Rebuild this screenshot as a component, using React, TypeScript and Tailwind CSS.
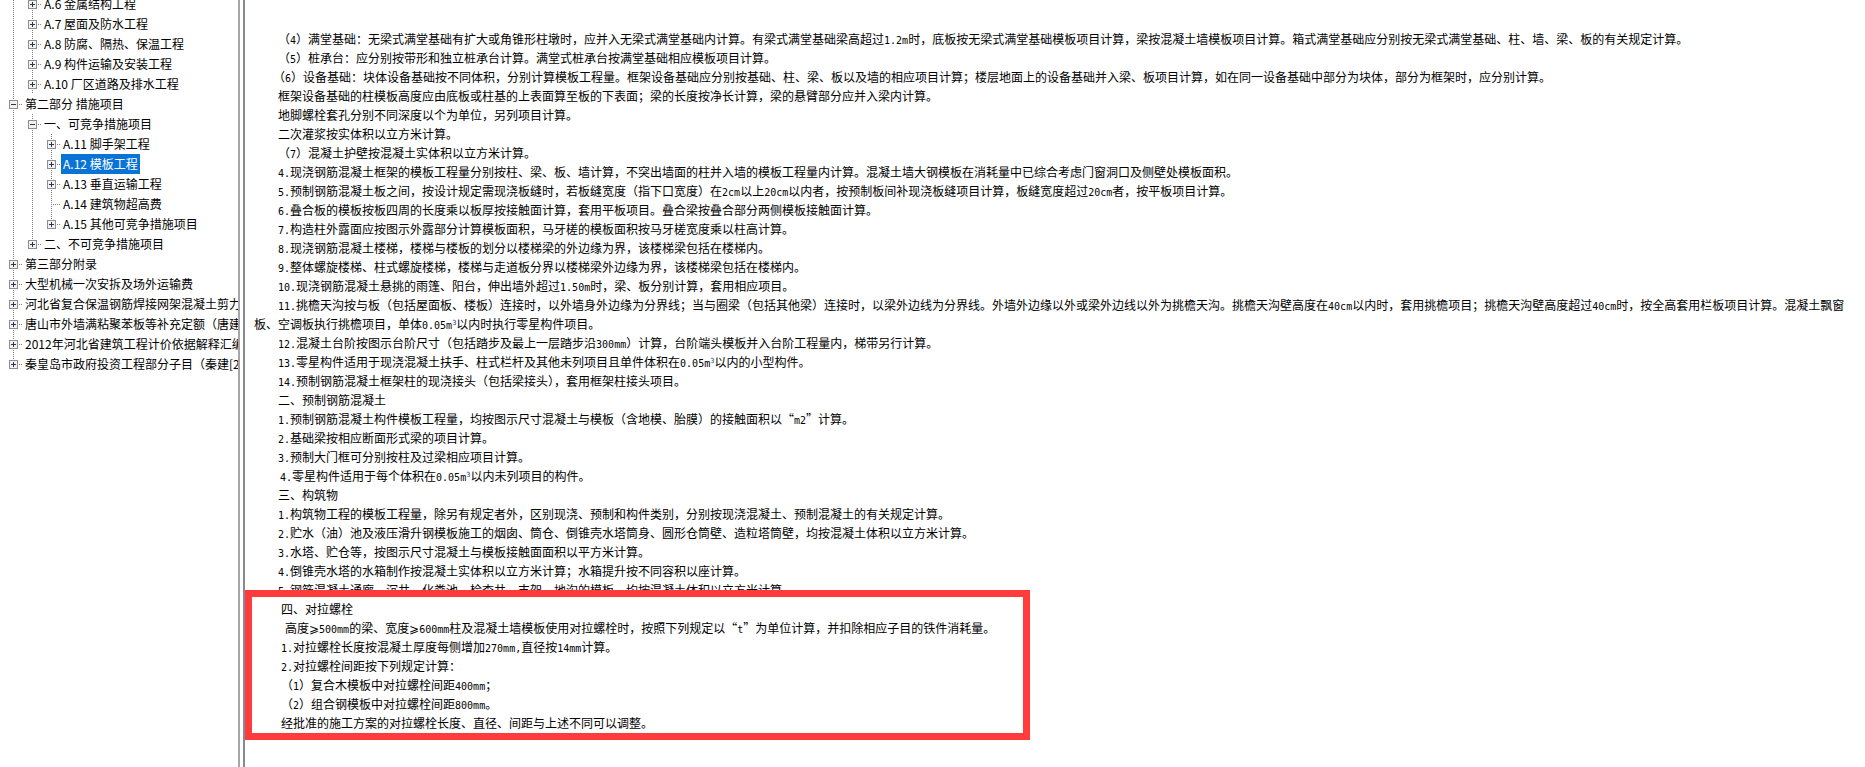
import React from "react";

type Cell = "none" | "pass" | "half" | "dot" | "plus" | "minus";

function TreeCell({ kind, last }: { kind: Cell; last?: boolean }) {
  const hasBox = kind === "plus" || kind === "minus";
  return (
    <svg width="19" height="20" viewBox="0 0 19 20" className="shrink-0 block" shapeRendering="crispEdges">
      {kind !== "none" && (
        <line x1="10.5" y1="0" x2="10.5" y2={kind === "half" || last ? 10 : 20} stroke="#808080" strokeDasharray="1 1" />
      )}
      {(kind === "dot" || kind === "half" || hasBox) && (
        <line x1="10" y1="10.5" x2="20" y2="10.5" stroke="#808080" strokeDasharray="1 1" />
      )}
      {hasBox && (
        <g>
          <rect x="6.5" y="6.5" width="8" height="8" fill="#f1f1f1" stroke="#8e8e8e" />
          <line x1="8" y1="10.5" x2="13" y2="10.5" stroke="#2a3552" />
          {kind === "plus" && <line x1="10.5" y1="8" x2="10.5" y2="13" stroke="#2a3552" />}
        </g>
      )}
    </svg>
  );
}

type Node = { cells: Cell[]; text: string; selected?: boolean; last?: boolean };

const treeRows: Node[] = [
  { cells: ["pass", "plus"], text: "A.6 金属结构工程" },
  { cells: ["pass", "plus"], text: "A.7 屋面及防水工程" },
  { cells: ["pass", "plus"], text: "A.8 防腐、隔热、保温工程" },
  { cells: ["pass", "plus"], text: "A.9 构件运输及安装工程" },
  { cells: ["pass", "plus"], text: "A.10 厂区道路及排水工程" },
  { cells: ["minus"], text: "第二部分 措施项目" },
  { cells: ["pass", "minus"], text: "一、可竞争措施项目" },
  { cells: ["pass", "pass", "plus"], text: "A.11 脚手架工程" },
  { cells: ["pass", "pass", "plus"], text: "A.12 模板工程", selected: true },
  { cells: ["pass", "pass", "plus"], text: "A.13 垂直运输工程" },
  { cells: ["pass", "pass", "dot"], text: "A.14 建筑物超高费" },
  { cells: ["pass", "pass", "plus"], text: "A.15 其他可竞争措施项目", last: true },
  { cells: ["pass", "plus"], text: "二、不可竞争措施项目", last: true },
  { cells: ["plus"], text: "第三部分附录" },
  { cells: ["plus"], text: "大型机械一次安拆及场外运输费" },
  { cells: ["plus"], text: "河北省复合保温钢筋焊接网架混凝土剪力墙" },
  { cells: ["plus"], text: "唐山市外墙满粘聚苯板等补充定额（唐建字" },
  { cells: ["plus"], text: "2012年河北省建筑工程计价依据解释汇编" },
  { cells: ["plus"], text: "秦皇岛市政府投资工程部分子目（秦建[2012]", last: true },
];

function TreeRow({ node }: { node: Node }) {
  return (
    <div className="flex h-5 items-stretch whitespace-nowrap">
      {node.cells.map((c, i) => (
        <TreeCell key={i} kind={c} last={node.last && i === node.cells.length - 1} />
      ))}
      <span
        className={
          "ml-px h-5 px-[2px] leading-5 text-[12px] " +
          (node.selected ? "bg-[#0a74d6] text-white" : "text-black")
        }
      >
        {node.text}
      </span>
    </div>
  );
}

function Rich({ text }: { text: string }) {
  const parts = text.split(/([\x20-\x7e]+)/).filter(Boolean);
  return (
    <>
      {parts.map((p, i) =>
        /^[\x20-\x7e]+$/.test(p) ? (
          <span key={i} className="font-['DejaVu_Sans_Mono',monospace] text-[10px]">
            {p}
          </span>
        ) : (
          <span key={i}>{p}</span>
        )
      )}
    </>
  );
}

function Line({ text, indent = "pl-[33px]" }: { text: string; indent?: string }) {
  const sup = text.split("³");
  return (
    <p className={"h-[19px] leading-[19px] whitespace-nowrap " + indent}>
      <Rich text={sup[0]} />
      {sup.length > 1 && (
        <>
          <span className="relative -top-[4px] font-['DejaVu_Sans_Mono',monospace] text-[7px] text-[#24408a]">3</span>
          <Rich text={sup[1]} />
        </>
      )}
    </p>
  );
}

const lines: [string, string?][] = [
  ["（4）满堂基础：无梁式满堂基础有扩大或角锥形柱墩时，应并入无梁式满堂基础内计算。有梁式满堂基础梁高超过1.2m时，底板按无梁式满堂基础模板项目计算，梁按混凝土墙模板项目计算。箱式满堂基础应分别按无梁式满堂基础、柱、墙、梁、板的有关规定计算。"],
  ["（5）桩承台：应分别按带形和独立桩承台计算。满堂式桩承台按满堂基础相应模板项目计算。"],
  ["（6）设备基础：块体设备基础按不同体积，分别计算模板工程量。框架设备基础应分别按基础、柱、梁、板以及墙的相应项目计算；楼层地面上的设备基础并入梁、板项目计算，如在同一设备基础中部分为块体，部分为框架时，应分别计算。", "pl-[28px]"],
  ["框架设备基础的柱模板高度应由底板或柱基的上表面算至板的下表面；梁的长度按净长计算，梁的悬臂部分应并入梁内计算。"],
  ["地脚螺栓套孔分别不同深度以个为单位，另列项目计算。"],
  ["二次灌浆按实体积以立方米计算。"],
  ["（7）混凝土护壁按混凝土实体积以立方米计算。"],
  ["4.现浇钢筋混凝土框架的模板工程量分别按柱、梁、板、墙计算，不突出墙面的柱并入墙的模板工程量内计算。混凝土墙大钢模板在消耗量中已综合考虑门窗洞口及侧壁处模板面积。"],
  ["5.预制钢筋混凝土板之间，按设计规定需现浇板缝时，若板缝宽度（指下口宽度）在2cm以上20cm以内者，按预制板间补现浇板缝项目计算，板缝宽度超过20cm者，按平板项目计算。"],
  ["6.叠合板的模板按板四周的长度乘以板厚按接触面计算，套用平板项目。叠合梁按叠合部分两侧模板接触面计算。"],
  ["7.构造柱外露面应按图示外露部分计算模板面积，马牙槎的模板面积按马牙槎宽度乘以柱高计算。"],
  ["8.现浇钢筋混凝土楼梯，楼梯与楼板的划分以楼梯梁的外边缘为界，该楼梯梁包括在楼梯内。"],
  ["9.整体螺旋楼梯、柱式螺旋楼梯，楼梯与走道板分界以楼梯梁外边缘为界，该楼梯梁包括在楼梯内。"],
  ["10.现浇钢筋混凝土悬挑的雨篷、阳台，伸出墙外超过1.50m时，梁、板分别计算，套用相应项目。"],
  ["11.挑檐天沟按与板（包括屋面板、楼板）连接时，以外墙身外边缘为分界线；当与圈梁（包括其他梁）连接时，以梁外边线为分界线。外墙外边缘以外或梁外边线以外为挑檐天沟。挑檐天沟壁高度在40cm以内时，套用挑檐项目；挑檐天沟壁高度超过40cm时，按全高套用栏板项目计算。混凝土飘窗"],
  ["板、空调板执行挑檐项目，单体0.05m³以内时执行零星构件项目。", "pl-[9px]"],
  ["12.混凝土台阶按图示台阶尺寸（包括踏步及最上一层踏步沿300mm）计算，台阶端头模板并入台阶工程量内，梯带另行计算。"],
  ["13.零星构件适用于现浇混凝土扶手、柱式栏杆及其他未列项目且单件体积在0.05m³以内的小型构件。"],
  ["14.预制钢筋混凝土框架柱的现浇接头（包括梁接头），套用框架柱接头项目。"],
  ["二、预制钢筋混凝土"],
  ["1.预制钢筋混凝土构件模板工程量，均按图示尺寸混凝土与模板（含地模、胎膜）的接触面积以“m2”计算。"],
  ["2.基础梁按相应断面形式梁的项目计算。"],
  ["3.预制大门框可分别按柱及过梁相应项目计算。"],
  ["4.零星构件适用于每个体积在0.05m³以内未列项目的构件。", "pl-[35px]"],
  ["三、构筑物"],
  ["1.构筑物工程的模板工程量，除另有规定者外，区别现浇、预制和构件类别，分别按现浇混凝土、预制混凝土的有关规定计算。"],
  ["2.贮水（油）池及液压滑升钢模板施工的烟囱、筒仓、倒锥壳水塔筒身、圆形仓筒壁、造粒塔筒壁，均按混凝土体积以立方米计算。"],
  ["3.水塔、贮仓等，按图示尺寸混凝土与模板接触面面积以平方米计算。"],
  ["4.倒锥壳水塔的水箱制作按混凝土实体积以立方米计算；水箱提升按不同容积以座计算。"],
  ["5.钢筋混凝土通廊、沉井、化粪池、检查井、支架、地沟的模板，均按混凝土体积以立方米计算。"],
  ["四、对拉螺栓", "pl-[36px]"],
  ["高度⩾500mm的梁、宽度⩾600mm柱及混凝土墙模板使用对拉螺栓时，按照下列规定以“t”为单位计算，并扣除相应子目的铁件消耗量。", "pl-[40px]"],
  ["1.对拉螺栓长度按混凝土厚度每侧增加270mm,直径按14mm计算。", "pl-[36px]"],
  ["2.对拉螺栓间距按下列规定计算：", "pl-[36px]"],
  ["（1）复合木模板中对拉螺栓间距400mm；", "pl-[36px]"],
  ["（2）组合钢模板中对拉螺栓间距800mm。", "pl-[36px]"],
  ["经批准的施工方案的对拉螺栓长度、直径、间距与上述不同可以调整。", "pl-[36px]"],
];

export default function App() {
  return (
    <div className="flex h-[767px] w-[1865px] overflow-hidden bg-white font-['Noto_Sans_CJK_SC','Noto_Sans',sans-serif] text-black">
      <aside className="h-full w-[238px] shrink-0 overflow-hidden pl-[3px]">
        <div className="-mt-[6px]">
          {treeRows.map((n, i) => (
            <TreeRow key={i} node={n} />
          ))}
        </div>
      </aside>
      <div className="h-full w-[2px] shrink-0 bg-[#a6a6a6]" />
      <div className="h-full w-[3px] shrink-0 bg-white" />
      <div className="h-full w-[2px] shrink-0 bg-[#868b90]" />
      <main className="relative h-full min-w-0 flex-1 overflow-hidden pt-[29px] text-[12px]">
        {lines.map(([t, ind], i) => (
          <Line key={i} text={t} indent={ind} />
        ))}
        <div className="absolute left-0 top-[590px] h-[150px] w-[785px] border-[7px] border-[#ff3b3b]" />
      </main>
    </div>
  );
}
